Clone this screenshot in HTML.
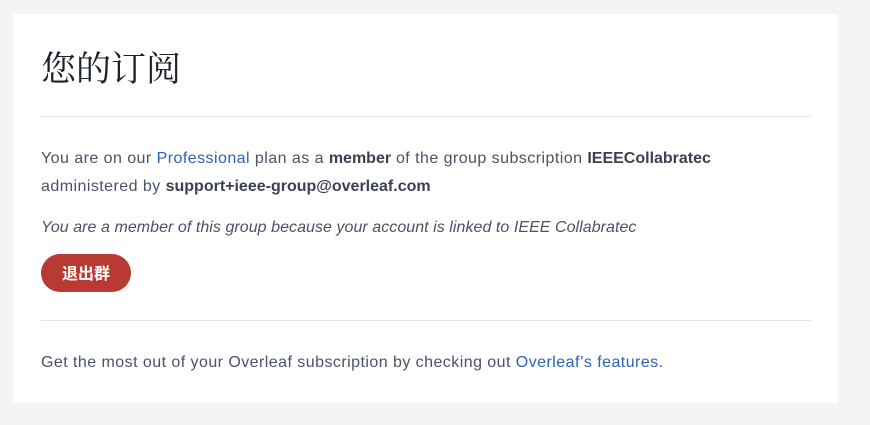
<!DOCTYPE html>
<html><head><meta charset="utf-8"><style>
html,body{margin:0;padding:0;background:#f3f4f6;width:870px;height:425px;overflow:hidden}
.card{position:absolute;left:13px;top:14px;width:825px;height:389px;background:#fff}
.t{position:absolute;left:28px;top:29px;font:35px "Noto Serif CJK SC",serif;color:#1b222c;line-height:48px;margin:0;font-weight:normal}
.hr{position:absolute;left:28px;width:770px;height:1px;background:#e4e6ea}
p{position:absolute;left:28px;margin:0;font:16px "Liberation Sans","Noto Sans CJK SC",sans-serif;color:#495365;line-height:28px;width:790px;letter-spacing:0.45px}
b{color:#3a4250;letter-spacing:0}
a{color:#2b64b4;text-decoration:none}
.btn{position:absolute;left:28px;top:240px;width:90px;height:38px;border-radius:19px;background:#b93a33;color:#fff;font:bold 16px "Noto Sans CJK SC",sans-serif;text-align:center;line-height:37px}
</style></head><body>
<div class="card">
<h1 class="t">您的订阅</h1>
<div class="hr" style="top:102px"></div>
<p style="top:131px">You are on our <a>Professional</a> plan as a <b>member</b> of the group subscription <b>IEEECollabratec</b><br>administered by <b>support+ieee-group@overleaf.com</b></p>
<p style="top:200px;font-style:italic;letter-spacing:0.05px">You are a member of this group because your account is linked to IEEE Collabratec</p>
<div class="btn">退出群</div>
<div class="hr" style="top:306px"></div>
<p style="top:335px">Get the most out of your Overleaf subscription by checking out <a>Overleaf’s features</a>.</p>
</div>
</body></html>
